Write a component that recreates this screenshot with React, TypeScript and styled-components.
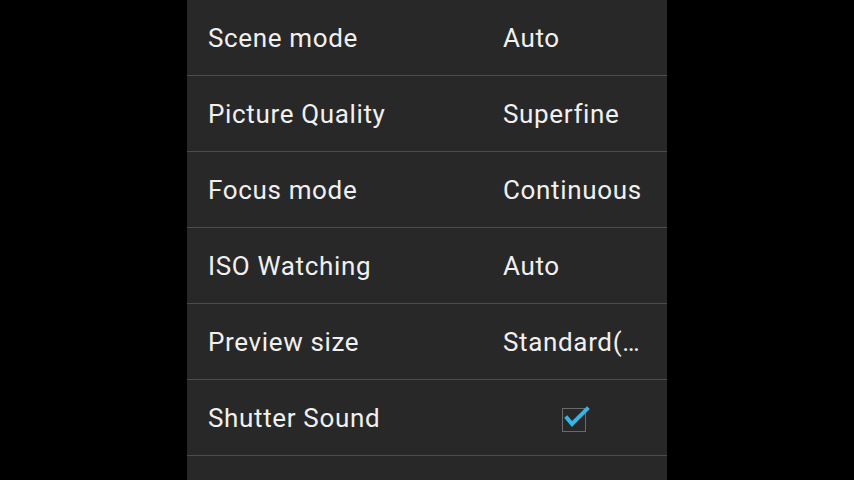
import React from "react";
import styled, { createGlobalStyle } from "styled-components";

const Global = createGlobalStyle`
  html, body { margin: 0; padding: 0; background: #000; }
  body { width: 854px; height: 480px; overflow: hidden; font-family: Roboto, "Noto Sans", sans-serif; }
`;

const Screen = styled.div`
  width: 854px;
  height: 480px;
  display: flex;
  justify-content: center;
  background: #000;
  overflow: hidden;
`;

const Panel = styled.div`
  width: 480px;
  height: 480px;
  background: #282828;
  display: flex;
  flex-direction: column;
  overflow: hidden;
`;

const Row = styled.div`
  flex: 0 0 76px;
  box-sizing: border-box;
  display: grid;
  grid-template-columns: 295px 1fr;
  align-items: center;
  padding-left: 21px;
  padding-top: 1px;
  border-bottom: 1px solid #4b4b4b;
  color: #f0f0f0;
  font-size: 26px;
  letter-spacing: 0.65px;
`;

const Label = styled.span`
  white-space: nowrap;
`;

const Value = styled.span`
  white-space: nowrap;
  overflow: hidden;
  text-overflow: ellipsis;
  padding-right: 24px;
`;

const CheckCell = styled.span`
  display: flex;
  padding-left: 56px;
`;

const Check = () => (
  <svg width="32" height="32" viewBox="0 0 32 32">
    <rect x="3.5" y="6.5" width="23" height="23" fill="none" stroke="#6a6a6a" strokeWidth="1" />
    <path d="M8 16 L13 22 L28 7" fill="none" stroke="#33b5e5" strokeWidth="4" strokeLinecap="square" />
  </svg>
);

const rows: { label: string; value?: string }[] = [
  { label: "Scene mode", value: "Auto" },
  { label: "Picture Quality", value: "Superfine" },
  { label: "Focus mode", value: "Continuous" },
  { label: "ISO Watching", value: "Auto" },
  { label: "Preview size", value: "Standard(4:3)" },
  { label: "Shutter Sound" },
];

export default function App() {
  return (
    <Screen>
      <Global />
      <Panel>
        {rows.map((r) => (
          <Row key={r.label}>
            <Label>{r.label}</Label>
            {r.value ? (
              <Value>{r.value}</Value>
            ) : (
              <CheckCell>
                <Check />
              </CheckCell>
            )}
          </Row>
        ))}
        <Row />
      </Panel>
    </Screen>
  );
}
